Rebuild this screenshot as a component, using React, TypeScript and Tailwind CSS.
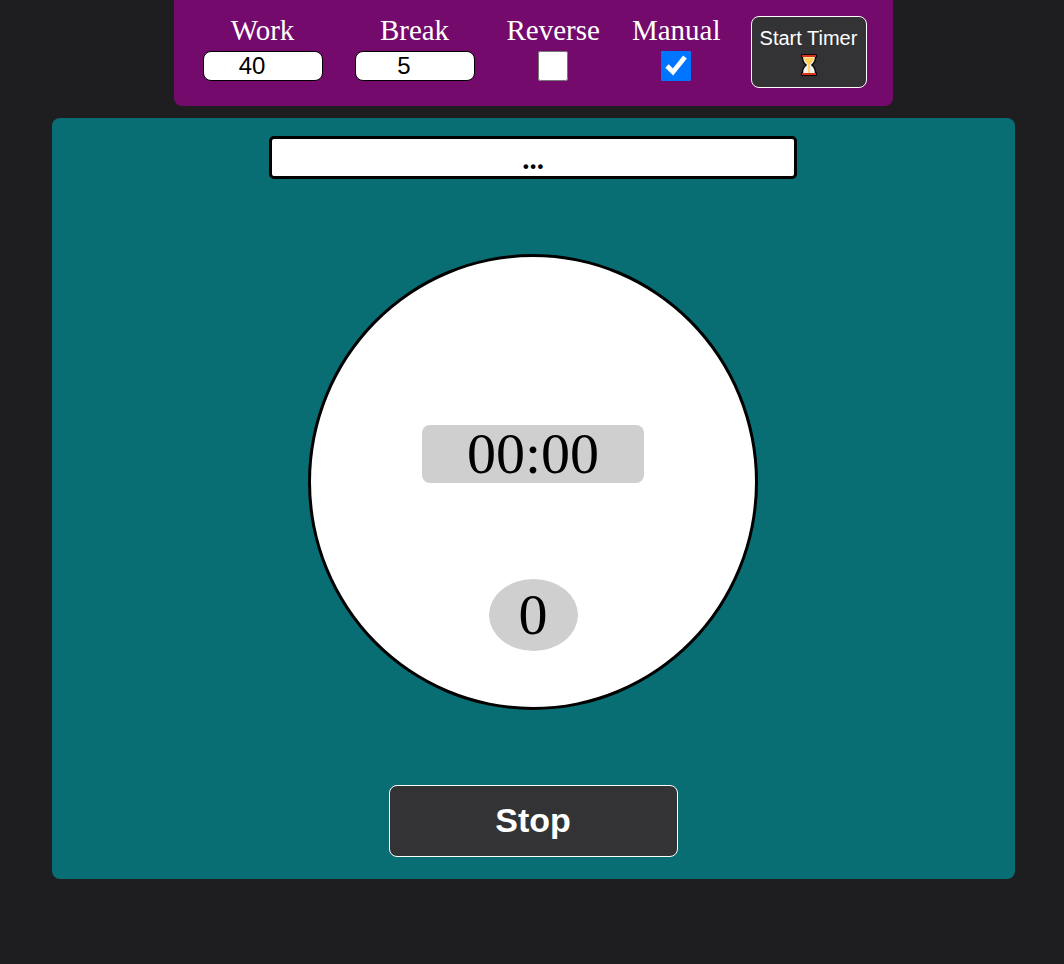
import { useState } from "react";

const fieldLabel = "text-[29px] leading-7 text-white";
const numberInput =
  "h-[30px] w-[120px] rounded-lg border border-black bg-white pr-1.5 text-center font-['Liberation_Sans',Arial,sans-serif] text-2xl leading-7 text-black";

function Hourglass() {
  return (
    <svg width="16" height="22" viewBox="0 0 16 22" aria-hidden="true">
      <path
        d="M1 0h14q1 0 1 1v2q0 1-1 1.200 0 4.300-3.200 6.800 3.200 2.500 3.200 6.800 1 .2 1 1.200v2q0 1-1 1H1q-1 0-1-1v-2q0-1 1-1.200 0-4.300 3.200-6.800Q1 8.500 1 4.200 0 4 0 3V1q0-1 1-1z"
        fill="#0c0805"
      />
      <path d="M2.200 3h11.600c0 4.200-1.600 6-4 8 2.400 2 4 3.800 4 8H2.200c0-4.200 1.600-6 4-8-2.400-2-4-3.800-4-8z" fill="#f1efee" />
      <path d="M3.200 3.500h9.600c0 3.200-1.500 4.900-3.900 6.700V19H7.100v-8.800C4.700 8.400 3.200 6.700 3.200 3.500z" fill="#ffcf58" />
      <path d="M1 1h14v2H1zM1 19h14v2H1z" fill="#d8321a" />
    </svg>
  );
}

export default function App() {
  const [work, setWork] = useState("40");
  const [rest, setRest] = useState("5");
  const [reverse, setReverse] = useState(false);
  const [manual, setManual] = useState(true);

  return (
    <div className="flex min-h-screen flex-col items-center gap-3 bg-[#1e1e20] pl-0.5 font-['Liberation_Serif','Times_New_Roman',serif]">
      <header className="flex items-start gap-[30px] rounded-b-lg bg-[#730a6c] pt-4 pr-[26px] pb-[18px] pl-[29px]">
        <div className="flex gap-8">
          <div className="flex flex-col items-center gap-[7px]">
            <label htmlFor="work" className={fieldLabel}>Work</label>
            <input id="work" type="number" value={work} onChange={(e) => setWork(e.target.value)} className={numberInput} />
          </div>
          <div className="flex flex-col items-center gap-[7px]">
            <label htmlFor="break" className={fieldLabel}>Break</label>
            <input id="break" type="number" value={rest} onChange={(e) => setRest(e.target.value)} className={numberInput} />
          </div>
          <div className="flex flex-col items-center gap-[7px]">
            <label htmlFor="reverse" className={fieldLabel}>Reverse</label>
            <input id="reverse" type="checkbox" checked={reverse} onChange={(e) => setReverse(e.target.checked)} className="size-[30px]" />
          </div>
          <div className="flex flex-col items-center gap-[7px]">
            <label htmlFor="manual" className={fieldLabel}>Manual</label>
            <input id="manual" type="checkbox" checked={manual} onChange={(e) => setManual(e.target.checked)} className="size-[30px]" />
          </div>
        </div>
        <button
          type="button"
          className="flex h-[72px] w-[116px] flex-col items-center gap-1 rounded-lg border border-white bg-[#333335] pt-[9px] font-['Liberation_Sans',Arial,sans-serif] text-xl leading-6 whitespace-nowrap text-white"
        >
          Start Timer
          <Hourglass />
        </button>
      </header>

      <main className="flex w-[963px] max-w-full flex-col items-center rounded-lg bg-[#096e73] pt-[18px] pb-[22px]">
        <h2 className="w-[528px] max-w-full rounded-[5px] border-3 border-black bg-white pt-1 text-center text-[29px] leading-[33px] font-bold text-black">
          ...
        </h2>
        <section className="mt-[75px] flex h-[456px] w-[450px] max-w-full flex-col items-center gap-24 rounded-[50%] border-3 border-black bg-white pt-[168px] text-[58px] leading-[58px] text-black">
          <div className="w-[222px] rounded-lg bg-[#cfcfcf] text-center">00:00</div>
          <div className="w-[89px] rounded-[50%] bg-[#cfcfcf] py-[7px] text-center">0</div>
        </section>
        <button
          type="button"
          className="mt-[75px] h-[72px] w-[289px] rounded-lg border border-white bg-[#333335] pb-0.5 font-['Liberation_Sans',Arial,sans-serif] text-[34px] leading-10 font-bold text-white"
        >
          Stop
        </button>
      </main>
    </div>
  );
}
